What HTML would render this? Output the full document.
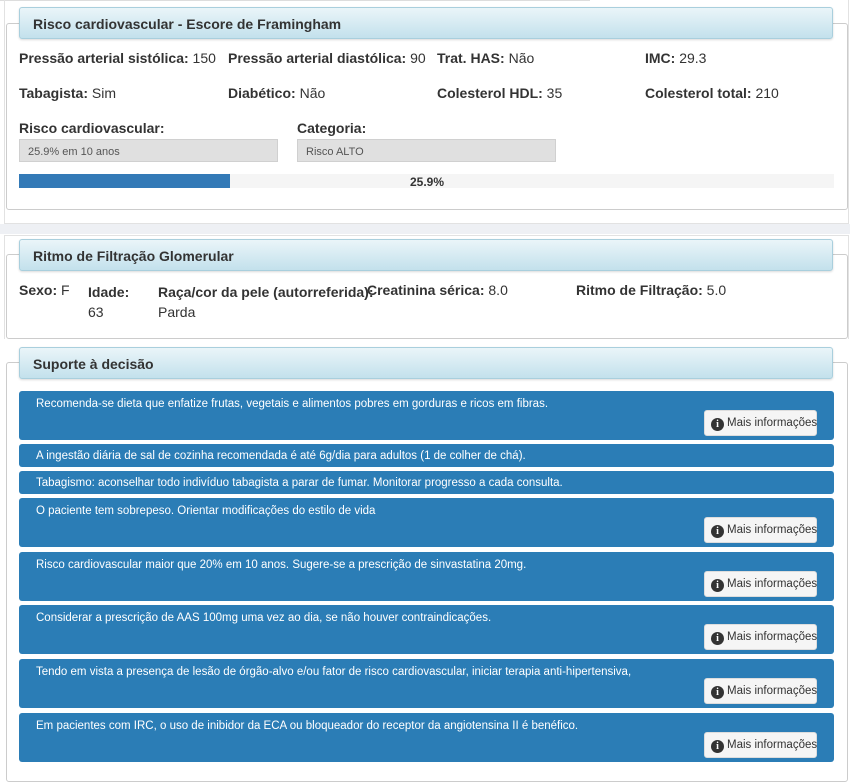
<!DOCTYPE html>
<html><head><meta charset="utf-8"><style>
*{box-sizing:border-box;margin:0;padding:0}
body{width:850px;height:777px;background:#fff;font-family:"Liberation Sans",Arial,sans-serif;color:#333;position:relative;overflow:hidden}
.a{position:absolute}
.fs{position:absolute;border:1px solid #ccc;border-radius:3px;background:#fff}
.lg{position:absolute;left:19px;width:814px;height:32px;border:1px solid #a9cfdd;border-radius:3px;background:linear-gradient(#eaf5f9,#c3e1ec);font-weight:bold;font-size:14px;padding:8px 0 0 13px;color:#333;box-shadow:0 1px 2px rgba(0,0,0,.15)}
.t{position:absolute;font-size:14px;white-space:nowrap}
.t b{font-weight:bold}
.inp{position:absolute;height:23px;background:#e0e0e0;border:1px solid #d0d0d0;font-size:11px;padding:6px 0 0 8px;color:#555}
.al{position:absolute;left:19px;width:815px;background:#2b7db6;border-radius:3px;color:#fff;font-size:11.5px;padding:7px 0 0 17px;white-space:nowrap}
.btn{position:absolute;right:17px;bottom:4px;width:113px;height:26px;background:#f5f5f5;border:1px solid #ddd;border-radius:3px;color:#333;font-size:11.5px;padding:6px 0 0 6px}
.ic{display:inline-block;width:13px;height:13px;border-radius:50%;background:#333;color:#fff;font-size:10px;font-weight:bold;text-align:center;line-height:13px;font-family:"Liberation Serif",serif;vertical-align:-1px;margin-right:3px}
</style></head><body>
<div class="a" style="left:0;top:0;width:590px;height:1px;background:#ddd"></div>
<div class="a" style="left:0;top:224px;width:850px;height:10px;background:#eef0f4"></div>
<div class="a" style="left:4px;top:0;width:845px;height:224px;border:1px solid #e2e2e2;border-top:none"></div>
<div class="fs" style="left:6px;top:23px;width:842px;height:187px"></div>
<div class="lg" style="top:7px">Risco cardiovascular - Escore de Framingham</div>
<div class="t" style="left:19px;top:50px"><b>Pressão arterial sistólica:</b> 150</div>
<div class="t" style="left:228px;top:50px"><b>Pressão arterial diastólica:</b> 90</div>
<div class="t" style="left:437px;top:50px"><b>Trat. HAS:</b> Não</div>
<div class="t" style="left:645px;top:50px"><b>IMC:</b> 29.3</div>
<div class="t" style="left:19px;top:85px"><b>Tabagista:</b> Sim</div>
<div class="t" style="left:228px;top:85px"><b>Diabético:</b> Não</div>
<div class="t" style="left:437px;top:85px"><b>Colesterol HDL:</b> 35</div>
<div class="t" style="left:645px;top:85px"><b>Colesterol total:</b> 210</div>
<div class="t" style="left:19px;top:120px"><b>Risco cardiovascular:</b></div>
<div class="t" style="left:297px;top:120px"><b>Categoria:</b></div>
<div class="inp" style="left:19px;top:139px;width:259px">25.9% em 10 anos</div>
<div class="inp" style="left:297px;top:139px;width:259px">Risco ALTO</div>
<div class="a" style="left:19px;top:174px;width:815px;height:14px;background:#f5f5f5"></div>
<div class="a" style="left:19px;top:174px;width:211px;height:14px;background:#337ab7"></div>
<div class="t" style="left:410px;top:175px;font-size:12px;font-weight:bold">25.9%</div>

<div class="a" style="left:4px;top:235px;width:845px;height:104px;border:1px solid #e2e2e2;border-bottom:none"></div>
<div class="fs" style="left:6px;top:254px;width:842px;height:85px"></div>
<div class="lg" style="top:239px">Ritmo de Filtração Glomerular</div>
<div class="t" style="left:19px;top:282px"><b>Sexo:</b> F</div>
<div class="t" style="left:88px;top:282px;line-height:20px"><b>Idade:</b><br>63</div>
<div class="t" style="left:158px;top:282px;line-height:20px"><b>Raça/cor da pele (autorreferida):</b><br>Parda</div>
<div class="t" style="left:367px;top:282px"><b>Creatinina sérica:</b> 8.0</div>
<div class="t" style="left:576px;top:282px"><b>Ritmo de Filtração:</b> 5.0</div>

<div class="fs" style="left:6px;top:362px;width:842px;height:420px"></div>
<div class="lg" style="top:347px">Suporte à decisão</div>
<div class="al" style="top:391px;height:49px">Recomenda-se dieta que enfatize frutas, vegetais e alimentos pobres em gorduras e ricos em fibras.<div class="btn"><span class="ic">i</span>Mais informações</div></div>
<div class="al" style="top:444px;height:23px;padding-top:6px">A ingestão diária de sal de cozinha recomendada é até 6g/dia para adultos (1 de colher de chá).</div>
<div class="al" style="top:471px;height:23px;padding-top:6px">Tabagismo: aconselhar todo indivíduo tabagista a parar de fumar. Monitorar progresso a cada consulta.</div>
<div class="al" style="top:498px;height:49px">O paciente tem sobrepeso. Orientar modificações do estilo de vida<div class="btn"><span class="ic">i</span>Mais informações</div></div>
<div class="al" style="top:552px;height:49px">Risco cardiovascular maior que 20% em 10 anos. Sugere-se a prescrição de sinvastatina 20mg.<div class="btn"><span class="ic">i</span>Mais informações</div></div>
<div class="al" style="top:605px;height:49px">Considerar a prescrição de AAS 100mg uma vez ao dia, se não houver contraindicações.<div class="btn"><span class="ic">i</span>Mais informações</div></div>
<div class="al" style="top:659px;height:49px">Tendo em vista a presença de lesão de órgão-alvo e/ou fator de risco cardiovascular, iniciar terapia anti-hipertensiva,<div class="btn"><span class="ic">i</span>Mais informações</div></div>
<div class="al" style="top:713px;height:49px">Em pacientes com IRC, o uso de inibidor da ECA ou bloqueador do receptor da angiotensina II é benéfico.<div class="btn"><span class="ic">i</span>Mais informações</div></div>
</body></html>
